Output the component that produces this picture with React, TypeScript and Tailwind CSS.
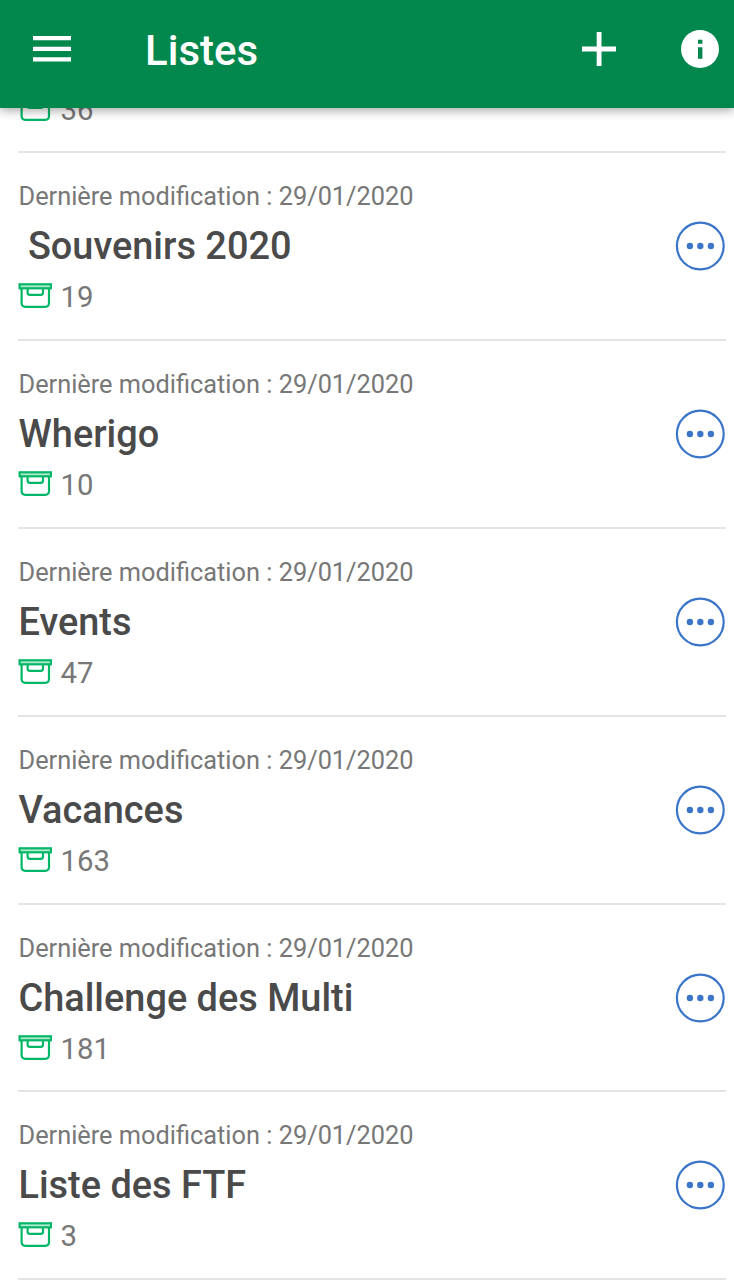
type CacheList = {
  name: string;
  count: number;
  date: string;
};

const lists: CacheList[] = [
  { name: " Souvenirs 2020", count: 19, date: "29/01/2020" },
  { name: "Wherigo", count: 10, date: "29/01/2020" },
  { name: "Events", count: 47, date: "29/01/2020" },
  { name: "Vacances", count: 163, date: "29/01/2020" },
  { name: "Challenge des Multi", count: 181, date: "29/01/2020" },
  { name: "Liste des FTF", count: 3, date: "29/01/2020" },
];

function MenuIcon() {
  return (
    <svg viewBox="0 0 38 26" className="h-[26px] w-[38px]" fill="#fff">
      <path d="M0 0h38v4.3H0zM0 10.7h38v4.3H0zM0 21.3h38v4.3H0z" />
    </svg>
  );
}

function PlusIcon() {
  return (
    <svg viewBox="0 0 34 34" className="size-[34px]" fill="#fff">
      <path d="M14.7 0h4.8v14.6H34v4.8H19.5V34h-4.8V19.4H0v-4.8h14.7z" />
    </svg>
  );
}

function InfoIcon() {
  return (
    <svg viewBox="0 0 38 38" className="size-[38px]">
      <circle cx="19" cy="19" r="19" fill="#fff" />
      <path d="M17 9.7h4.4v4H17zM17 17.2h4.4v11.5H17z" fill="#02874d" />
    </svg>
  );
}

// Plastic container with a lid and a handle
function BoxIcon() {
  return (
    <svg
      viewBox="0 0 34 25"
      className="h-[25px] w-[34px]"
      fill="none"
      stroke="#02b767"
      strokeWidth="2.2"
      strokeLinejoin="round"
    >
      <rect x="1.6" y="1.3" width="31.4" height="4" fill="#b5ead1" strokeLinejoin="miter" />
      <path d="M3.6 5.5v14.6q0 3.7 3.7 3.7h20q3.7 0 3.7-3.7V5.5" />
      <path d="M9.6 5.5v3.9q0 2.4 2.4 2.4h10.6q2.4 0 2.4-2.4V5.5" />
    </svg>
  );
}

function MoreIcon() {
  return (
    <svg viewBox="0 0 50 50" className="size-[50px]">
      <circle cx="25.3" cy="25" r="23.4" fill="none" stroke="#3a75c8" strokeWidth="2.2" />
      <g fill="#3a75c8">
        <circle cx="14.9" cy="25" r="3.2" />
        <circle cx="25.3" cy="25" r="3.2" />
        <circle cx="35.9" cy="25" r="3.2" />
      </g>
    </svg>
  );
}

function CacheCount({ count }: { count: number }) {
  return (
    <div className="-ml-px flex h-9 items-center gap-[9px]">
      <BoxIcon />
      <span className="mt-[3px] text-[29.3px] leading-9 text-[#777]">{count}</span>
    </div>
  );
}

function ListRow({ list }: { list: CacheList }) {
  return (
    <li className="flex h-[187.85px] items-start justify-between border-b-2 border-[#e4e4e4] pt-[27px]">
      <div className="pl-[0.5px]">
        <p className="text-[25.35px] leading-8 text-[#777]">
          Dernière modification : {list.date}
        </p>
        <h2 className="mt-3 whitespace-pre text-[37.9px] font-medium leading-[44px] text-[#4a4a4a]">
          {list.name}
        </h2>
        <div className="mt-[9.5px]">
          <CacheCount count={list.count} />
        </div>
      </div>
      <button className="-mr-px mt-[41px] pr-[2px]" aria-label="Options">
        <MoreIcon />
      </button>
    </li>
  );
}

export default function App() {
  return (
    <div className="flex h-[1281px] flex-col overflow-hidden bg-white font-['Roboto',sans-serif]">
      <header className="relative z-10 flex h-[107.5px] shrink-0 items-center bg-[#02874d] pb-[9px] pl-[33px] pr-[15px] shadow-[0_2px_10px_rgba(0,0,0,0.38)]">
        <button aria-label="Menu">
          <MenuIcon />
        </button>
        <h1 className="ml-[74px] mt-[3px] flex-1 text-[42px] font-medium leading-[50px] text-white">
          Listes
        </h1>
        <button className="mr-[65px]" aria-label="Ajouter">
          <PlusIcon />
        </button>
        <button aria-label="Informations">
          <InfoIcon />
        </button>
      </header>

      <main className="-mt-[18px] min-h-0 flex-1 overflow-hidden pl-[18px] pr-2">
        <ul>
          {/* Row scrolled under the header */}
          <li className="h-[63.75px] border-b-2 border-[#e4e4e4] pl-[0.5px] pt-[0.5px]">
            <CacheCount count={36} />
          </li>
          {lists.map((list) => (
            <ListRow key={list.name} list={list} />
          ))}
        </ul>
      </main>
    </div>
  );
}
